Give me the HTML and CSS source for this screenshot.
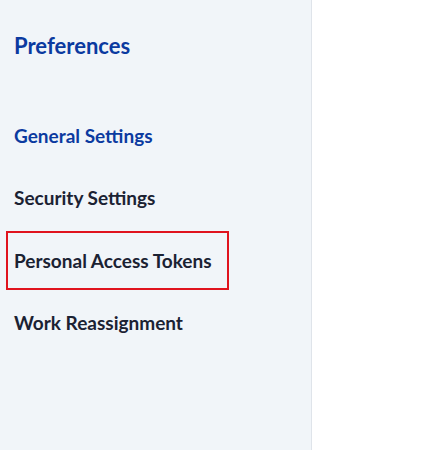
FILE: index.html
```html
<!DOCTYPE html>
<html lang="en">
<head>
<meta charset="utf-8">
<title>Preferences</title>
<link rel="stylesheet" href="styles.css">
</head>
<body>
<div class="layout">
  <aside class="sidebar">
    <h1 class="title">Preferences</h1>
    <nav class="nav">
      <a class="nav-item active" href="#">General Settings</a>
      <a class="nav-item" href="#">Security Settings</a>
      <a class="nav-item focused" href="#">Personal Access Tokens</a>
      <a class="nav-item" href="#">Work Reassignment</a>
    </nav>
  </aside>
  <main class="content"></main>
</div>
</body>
</html>
```
FILE: styles.css
```css
html, body {
  margin: 0;
  padding: 0;
  height: 100%;
}
body {
  font-family: Lato, "Liberation Sans", sans-serif;
  background: #ffffff;
}
.layout {
  display: flex;
  height: 100%;
}
.sidebar {
  width: 312px;
  flex: none;
  background: #f1f5f9;
  border-right: 1px solid #dfe4ea;
  padding: 31px 0 0 8px;
  box-sizing: border-box;
}
.title {
  margin: 0 0 0 6px;
  font-size: 22px;
  line-height: 30px;
  font-weight: 700;
  color: #0b3aa0;
}
.nav {
  display: flex;
  flex-direction: column;
  align-items: flex-start;
  gap: 3.3px;
  margin-top: 45px;
}
.nav-item {
  display: inline-flex;
  align-items: center;
  height: 59px;
  box-sizing: border-box;
  padding: 0 15px 0 6px;
  border: 2px solid transparent;
  margin-left: -2px;
  font-size: 19px;
  font-weight: 700;
  color: #1b2233;
  text-decoration: none;
}
.nav-item.active {
  color: #0b3aa0;
}
.nav-item.focused {
  border-color: #e0141e;
}
.content {
  flex: 1;
}
```
